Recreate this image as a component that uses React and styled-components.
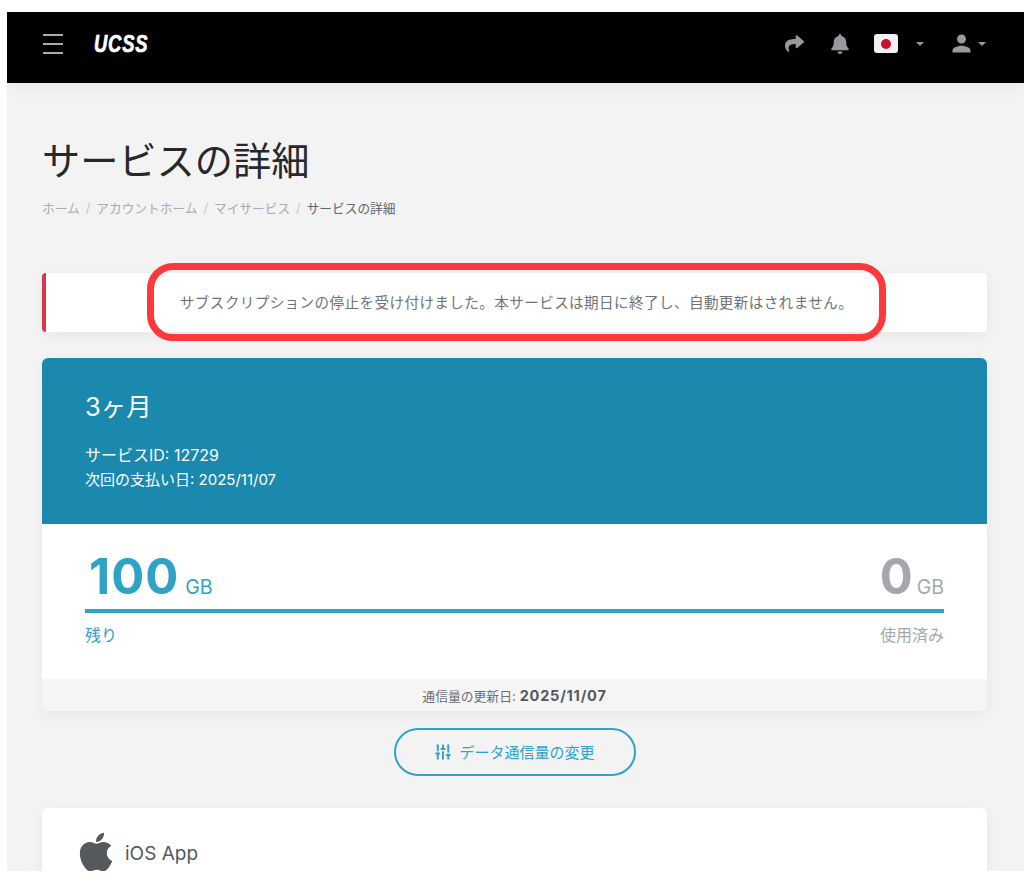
import React from 'react'
import styled, { createGlobalStyle } from 'styled-components'
import { FaApple, FaBell, FaShare } from 'react-icons/fa'
import { MdPerson } from 'react-icons/md'
import { SlidersVertical } from 'lucide-react'

const GlobalStyle = createGlobalStyle`
  html, body {
    margin: 0;
    background: #fff;
    overflow: hidden;
  }
  body {
    font-family: Inter, "Noto Sans CJK JP", sans-serif;
  }
`

const Frame = styled.div`
  box-sizing: border-box;
  width: 1024px;
  height: 879px;
  padding: 12px 0 8px 7px;
  overflow: hidden;
`

const Screen = styled.div`
  height: 100%;
  background: #f3f3f4;
  overflow: hidden;
`

const TopBar = styled.header`
  box-sizing: border-box;
  height: 71px;
  background: #000;
  display: flex;
  align-items: center;
  padding: 0 38px 8px 36px;
  box-shadow: 0 4px 16px rgba(0, 0, 0, 0.05);
`

const MenuButton = styled.div`
  width: 20px;
  display: flex;
  flex-direction: column;
  gap: 7px;
  span {
    display: block;
    height: 2px;
    background: #a9abb0;
  }
`

const Logo = styled.div`
  margin: 2px 0 0 31px;
  color: #fff;
  font-family: "Liberation Sans", sans-serif;
  font-size: 23px;
  font-weight: 700;
  font-style: italic;
  letter-spacing: 1px;
  -webkit-text-stroke: 0.7px #fff;
  transform: scaleX(0.8);
  transform-origin: left center;
`

const TopActions = styled.div`
  margin-left: auto;
  display: flex;
  align-items: center;
  color: #98999e;
`

const ActionIcon = styled.span`
  display: flex;
  margin-left: ${({ $gap }) => $gap}px;
`

const Flag = styled.span`
  margin-left: 24px;
  width: 24px;
  height: 19px;
  border-radius: 3px;
  background: #f1f1f4;
  display: flex;
  align-items: center;
  justify-content: center;
  &::after {
    content: '';
    width: 10px;
    height: 10px;
    border-radius: 50%;
    background: #c8102e;
  }
`

const Caret = styled.span`
  margin-left: ${({ $gap }) => $gap}px;
  width: 0;
  height: 0;
  border-left: 4px solid transparent;
  border-right: 4px solid transparent;
  border-top: 4px solid #98999e;
`

const Content = styled.main`
  padding: 53px 37px 0 35px;
`

const Title = styled.h1`
  margin: 0;
  font-size: 38.2px;
  line-height: 50px;
  font-weight: 400;
  color: #26282c;
`

const Crumbs = styled.nav`
  margin-top: 14px;
  display: flex;
  font-size: 12.7px;
  line-height: 18px;
`

const Crumb = styled.span`
  color: ${({ $current }) => ($current ? '#63666b' : '#a9abb0')};
  &:not(:first-child)::before {
    content: '/';
    margin: 0 6px;
    color: #c6c7ca;
  }
`

const Notice = styled.div`
  position: relative;
  margin-top: 55px;
  height: 59px;
  box-sizing: border-box;
  display: flex;
  align-items: center;
  justify-content: center;
  background: #fff;
  border-left: 4px solid #dc3545;
  border-radius: 4px;
  box-shadow: 0 4px 16px rgba(0, 0, 0, 0.05);
  padding: 0 0 2px 0;
  font-size: 14.6px;
  letter-spacing: 0.38px;
  color: #6f7276;
`

const Highlight = styled.div`
  position: absolute;
  left: 101px;
  top: -10px;
  width: 739px;
  height: 78px;
  box-sizing: border-box;
  border: 7px solid #ff383c;
  border-radius: 26px;
`

const PlanCard = styled.section`
  margin-top: 26px;
  border-radius: 6px;
  overflow: hidden;
  background: #fff;
  box-shadow: 0 4px 16px rgba(0, 0, 0, 0.05);
`

const PlanHeader = styled.div`
  height: 166px;
  box-sizing: border-box;
  padding: 30px 43px 0;
  background: #1b88ad;
  color: #fff;
`

const PlanName = styled.div`
  font-size: 25.5px;
  line-height: 38px;
`

const PlanLine = styled.div`
  font-size: ${({ $size }) => $size}px;
  line-height: 20px;
  margin-top: ${({ $gap }) => $gap}px;
`

const Usage = styled.div`
  height: 155px;
  box-sizing: border-box;
  padding: 26px 43px 0;
`

const UsageRow = styled.div`
  display: flex;
  justify-content: space-between;
  align-items: flex-end;
  height: 56px;
`

const Amount = styled.div`
  display: flex;
  align-items: baseline;
  gap: ${({ $muted }) => ($muted ? '3px' : '6px')};
  margin-bottom: 1px;
  padding-left: ${({ $muted }) => ($muted ? '0' : '4px')};
  color: ${({ $muted }) => ($muted ? '#a4a8ac' : '#2fa3c6')};
  b {
    font-size: 49px;
    line-height: 56px;
    font-weight: 700;
    letter-spacing: 1px;
  }
  span {
    font-size: 19.5px;
  }
`

const Bar = styled.div`
  height: 4px;
  background: #2fa3c6;
  margin-top: 3px;
`

const UsageLabels = styled.div`
  margin-top: 12px;
  display: flex;
  justify-content: space-between;
  font-size: 16px;
  line-height: 20px;
`

const UsageLabel = styled.span`
  color: ${({ $muted }) => ($muted ? '#a4a8ac' : '#2fa3c6')};
`

const RenewRow = styled.div`
  height: 32px;
  display: flex;
  align-items: center;
  justify-content: center;
  gap: 4px;
  background: #f5f5f6;
  font-size: 12.8px;
  color: #6b6e73;
  b {
    font-size: 14.5px;
    letter-spacing: 0.8px;
    color: #55585d;
  }
`

const ButtonRow = styled.div`
  margin-top: 17px;
  display: flex;
  justify-content: center;
`

const OutlineButton = styled.div`
  box-sizing: border-box;
  width: 242px;
  height: 48px;
  border: 2px solid #2fa3c6;
  border-radius: 24px;
  display: flex;
  align-items: center;
  justify-content: center;
  gap: 7px;
  padding-bottom: 1px;
  font-size: 15px;
  color: #2fa3c6;
`

const AppCard = styled.section`
  margin-top: 32px;
  height: 110px;
  box-sizing: border-box;
  padding: 22px 32px;
  background: #fff;
  border-radius: 6px;
  box-shadow: 0 4px 16px rgba(0, 0, 0, 0.05);
  display: flex;
  align-items: flex-start;
  gap: 7px;
  color: #55585d;
`

const AppName = styled.span`
  font-size: 19px;
  line-height: 24px;
  margin-top: 12px;
`

export default function App() {
  return (
    <Frame>
      <GlobalStyle />
      <Screen>
        <TopBar>
          <MenuButton>
            <span />
            <span />
            <span />
          </MenuButton>
          <Logo>UCSS</Logo>
          <TopActions>
            <ActionIcon $gap={0}>
              <FaShare size={19} />
            </ActionIcon>
            <ActionIcon $gap={26}>
              <FaBell size={20} />
            </ActionIcon>
            <Flag />
            <Caret $gap={18} />
            <ActionIcon $gap={24}>
              <MdPerson size={27} />
            </ActionIcon>
            <Caret $gap={3} />
          </TopActions>
        </TopBar>
        <Content>
          <Title>サービスの詳細</Title>
          <Crumbs>
            <Crumb>ホーム</Crumb>
            <Crumb>アカウントホーム</Crumb>
            <Crumb>マイサービス</Crumb>
            <Crumb $current>サービスの詳細</Crumb>
          </Crumbs>
          <Notice>
            サブスクリプションの停止を受け付けました。本サービスは期日に終了し、自動更新はされません。
            <Highlight />
          </Notice>
          <PlanCard>
            <PlanHeader>
              <PlanName>3ヶ月</PlanName>
              <PlanLine $size={16} $gap={19}>サービスID: 12729</PlanLine>
              <PlanLine $size={15} $gap={5}>次回の支払い日: 2025/11/07</PlanLine>
            </PlanHeader>
            <Usage>
              <UsageRow>
                <Amount>
                  <b>100</b>
                  <span>GB</span>
                </Amount>
                <Amount $muted>
                  <b>0</b>
                  <span>GB</span>
                </Amount>
              </UsageRow>
              <Bar />
              <UsageLabels>
                <UsageLabel>残り</UsageLabel>
                <UsageLabel $muted>使用済み</UsageLabel>
              </UsageLabels>
            </Usage>
            <RenewRow>
              通信量の更新日: <b>2025/11/07</b>
            </RenewRow>
          </PlanCard>
          <ButtonRow>
            <OutlineButton>
              <SlidersVertical size={18} strokeWidth={2.6} />
              データ通信量の変更
            </OutlineButton>
          </ButtonRow>
          <AppCard>
            <FaApple size={44} />
            <AppName>iOS App</AppName>
          </AppCard>
        </Content>
      </Screen>
    </Frame>
  )
}
